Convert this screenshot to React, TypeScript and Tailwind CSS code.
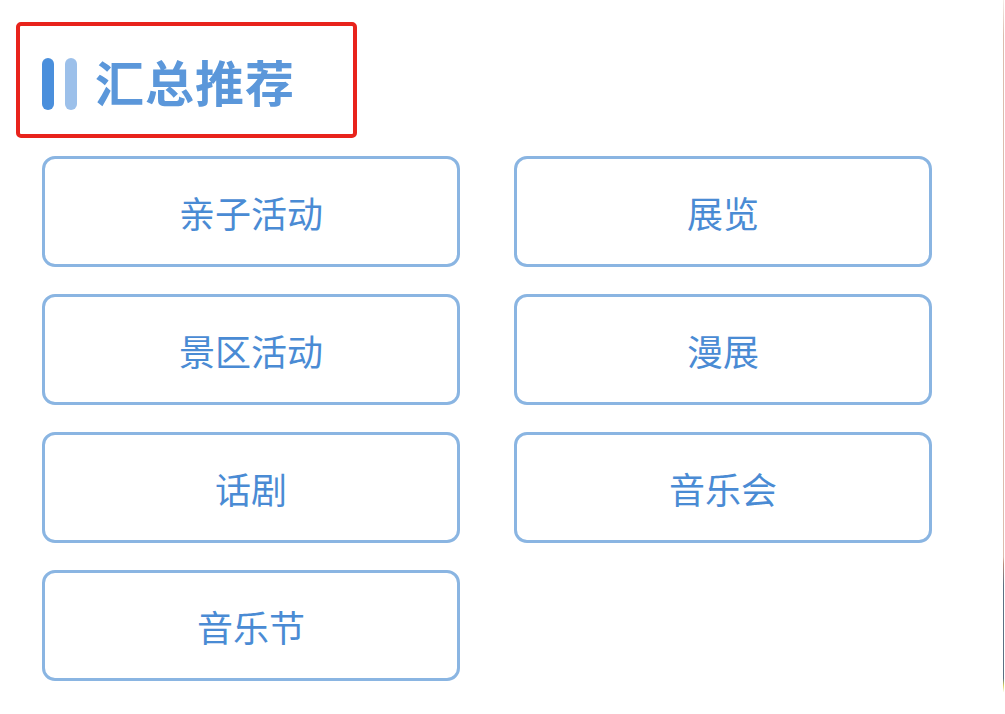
import React from 'react'

const items = ['亲子活动', '展览', '景区活动', '漫展', '话剧', '音乐会', '音乐节']

const cjk = { fontFamily: '"Noto Sans CJK SC", "Noto Sans", sans-serif' }

export default function App() {
  return (
    <div className="flex h-[714px] w-[1005px] bg-white" style={cjk}>
      <div className="flex-1">
        <div className="ml-[16px] mt-[22px] flex h-[116px] w-[341px] items-center rounded-[5px] border-[4px] border-[#e8231c] pl-[22px]">
          <div className="mt-[7px] flex gap-[11px]">
            <span className="h-[52px] w-[12px] rounded-full bg-[#4a8fdc]" />
            <span className="h-[52px] w-[12px] rounded-full bg-[#9cc0ea]" />
          </div>
          <h1 className="ml-[18px] text-[49px] font-bold leading-none tracking-[1px] text-[#5b97da]">汇总推荐</h1>
        </div>

        <div className="mt-[18px] grid grid-cols-[418px_418px] gap-x-[54px] gap-y-[27px] pl-[42px]">
          {items.map((item) => (
            <button
              key={item}
              className="flex h-[111px] items-center justify-center rounded-[13px] border-[3px] border-[#8ab5e2] bg-white text-[36px] text-[#4a8bd4]"
            >
              {item}
            </button>
          ))}
        </div>
      </div>
      <div className="mr-[1px] w-px bg-[linear-gradient(to_bottom,#f4ece8_0%,#dcbcae_5%,#dcbcae_78%,#b98a7a_79%,#5c6f82_82%,#5c6f82_95%,#d8d060_96%,#ffffff_97%)]" />
    </div>
  )
}
